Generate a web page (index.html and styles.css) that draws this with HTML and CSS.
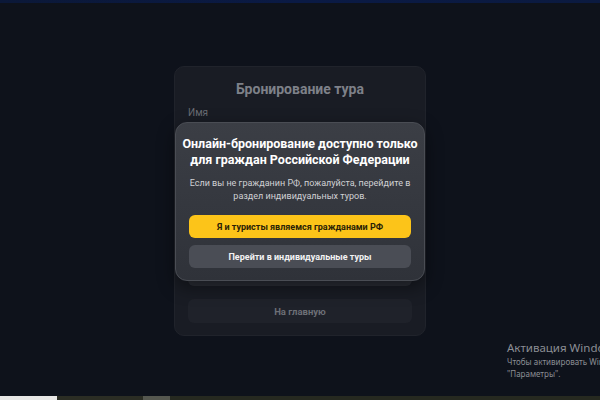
FILE: index.html
```html
<!DOCTYPE html>
<html lang="ru">
<head>
<meta charset="utf-8">
<link rel="stylesheet" href="styles.css">
</head>
<body>
<div class="topbar"></div>
<main class="stage">
  <section class="card">
    <h1 class="card-title">Бронирование тура</h1>
    <label class="field-label">Имя</label>
    <div class="fields">
      <div class="field"></div>
      <div class="field"></div>
      <div class="field field-last"></div>
    </div>
    <button class="home-btn">На главную</button>
    <div class="modal">
      <h2 class="modal-title">Онлайн-бронирование доступно только<br>для граждан Российской Федерации</h2>
      <p class="modal-text">Если вы не гражданин РФ, пожалуйста, перейдите в<br>раздел индивидуальных туров.</p>
      <button class="btn btn-yellow">Я и туристы являемся гражданами РФ</button>
      <button class="btn btn-grey">Перейти в индивидуальные туры</button>
    </div>
  </section>
</main>
<div class="activation">
  <div class="act-title">Активация Windows</div>
  <div class="act-text">Чтобы активировать Windows, перейдите в раздел</div>
  <div class="act-text">"Параметры".</div>
</div>
<div class="taskbar">
  <span class="tb-white"></span>
  <span class="tb-olive"></span>
  <span class="tb-grey"></span>
  <span class="tb-rest"></span>
</div>
</body>
</html>
```
FILE: styles.css
```css
* { box-sizing: border-box; }
html, body { margin: 0; padding: 0; }
body {
  width: 600px;
  height: 400px;
  overflow: hidden;
  background: #0e121b;
  font-family: Roboto, "Noto Sans", sans-serif;
  position: relative;
}
.topbar {
  height: 3px;
  background: linear-gradient(90deg, #0b1838, #0a1a45 50%, #0b1a40);
}
.stage {
  display: flex;
  justify-content: center;
  padding-top: 63px;
}
.card {
  position: relative;
  width: 252px;
  height: 270px;
  background: #191c24;
  border-radius: 10px;
  border: 1px solid #20232b;
  padding: 10px 13px 12px;
  display: flex;
  flex-direction: column;
}
.card-title {
  margin: 0;
  text-align: center;
  font-size: 14px;
  font-weight: 700;
  color: #7e8189;
  line-height: 24px;
}
.field-label {
  display: block;
  margin-top: 6px;
  font-size: 10px;
  color: #6a6d74;
  line-height: 12px;
}
.fields {
  flex: 1;
  display: flex;
  flex-direction: column;
  justify-content: flex-end;
  gap: 8px;
}
.field {
  height: 24px;
  background: #23262e;
  border-radius: 6px;
}
.field-last { background: #2b2e36; }
.home-btn {
  display: block;
  width: 100%;
  height: 24px;
  margin-top: 13px;
  border: none;
  border-radius: 6px;
  background: #1f222a;
  color: #6c6f76;
  font-family: inherit;
  font-size: 9.5px;
  font-weight: 700;
}
.modal {
  position: absolute;
  left: 0;
  right: 0;
  top: 55px;
  height: 159px;
  background: linear-gradient(180deg, #3b3e45 0%, #34373e 60%, #2f3239 100%);
  border: 1px solid #4a4d54;
  border-radius: 12px;
  padding: 13px 6px 0;
  box-shadow: 0 6px 18px rgba(0,0,0,0.45);
  text-align: center;
}
.modal-title {
  margin: 0;
  font-size: 12.5px;
  font-weight: 700;
  color: #ffffff;
  line-height: 16px;
  white-space: nowrap;
}
.modal-text {
  margin: 9px 0 0;
  font-size: 9px;
  color: #d0d1d4;
  line-height: 13px;
  white-space: nowrap;
}
.btn {
  display: block;
  width: calc(100% - 14px);
  margin-left: 7px;
  height: 23px;
  border: none;
  border-radius: 6px;
  font-family: inherit;
  font-size: 9px;
  font-weight: 700;
}
.btn-yellow {
  margin-top: 12px;
  background: #fcc419;
  color: #2a2206;
}
.btn-grey {
  margin-top: 7px;
  background: #4a4d55;
  color: #f2f2f3;
}
.activation {
  position: absolute;
  left: 507px;
  top: 341px;
  white-space: nowrap;
  color: #8b8e94;
  font-family: "Noto Sans", "Open Sans", sans-serif;
}
.act-title { font-size: 11.5px; line-height: 14px; }
.act-text { font-size: 8px; line-height: 11px; margin-top: 1px; }
.taskbar {
  position: absolute;
  left: 0;
  bottom: 0;
  width: 600px;
  height: 4px;
  display: flex;
}
.tb-white { width: 57px; background: #e8e8e6; }
.tb-olive { width: 86px; background: #2b2d24; }
.tb-grey { width: 27px; background: #55574f; }
.tb-rest { flex: 1; background: #262920; }
```
